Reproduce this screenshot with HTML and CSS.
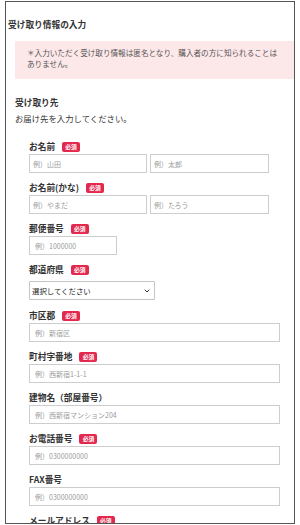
FILE: index.html
```html
<!DOCTYPE html>
<html lang="ja">
<head>
<meta charset="utf-8">
<title>受け取り情報の入力</title>
<link rel="stylesheet" href="styles.css">
</head>
<body>
<div class="frame">
  <h1 class="title">受け取り情報の入力</h1>
  <div class="notice">＊入力いただく受け取り情報は匿名となり、購入者の方に知られることはありません。</div>
  <h2 class="section-title">受け取り先</h2>
  <p class="section-desc">お届け先を入力してください。</p>
  <div class="form">
    <div class="field">
      <div class="label">お名前<span class="badge">必須</span></div>
      <div class="row">
        <input class="input half" placeholder="例）山田">
        <input class="input half" placeholder="例）太郎">
      </div>
    </div>
    <div class="field">
      <div class="label">お名前(かな)<span class="badge">必須</span></div>
      <div class="row">
        <input class="input half" placeholder="例）やまだ">
        <input class="input half" placeholder="例）たろう">
      </div>
    </div>
    <div class="field">
      <div class="label">郵便番号<span class="badge">必須</span></div>
      <input class="input zip" placeholder="例）1000000">
    </div>
    <div class="field field-select">
      <div class="label">都道府県<span class="badge">必須</span></div>
      <div class="select-wrap">
        <select class="select"><option>選択してください</option></select>
        <svg class="chevron" width="6" height="4" viewBox="0 0 6 4"><path d="M0.7 0.7 L3 3 L5.3 0.7" fill="none" stroke="#333" stroke-width="1"/></svg>
      </div>
    </div>
    <div class="field">
      <div class="label">市区郡<span class="badge">必須</span></div>
      <input class="input full" placeholder="例）新宿区">
    </div>
    <div class="field">
      <div class="label">町村字番地<span class="badge">必須</span></div>
      <input class="input full" placeholder="例）西新宿1-1-1">
    </div>
    <div class="field">
      <div class="label">建物名（部屋番号）</div>
      <input class="input full" placeholder="例）西新宿マンション204">
    </div>
    <div class="field">
      <div class="label">お電話番号<span class="badge">必須</span></div>
      <input class="input full" placeholder="例）0300000000">
    </div>
    <div class="field">
      <div class="label">FAX番号</div>
      <input class="input full" placeholder="例）0300000000">
    </div>
    <div class="field">
      <div class="label">メールアドレス<span class="badge">必須</span></div>
      <input class="input full" placeholder="例）info@example.com">
    </div>
  </div>
</div>
</body>
</html>
```

FILE: styles.css
```css
* { box-sizing: border-box; }
html, body { margin: 0; padding: 0; background: #fff; }
body {
  font-family: "Noto Sans CJK JP", "Noto Sans", sans-serif;
  color: #333;
}
.frame {
  width: 290px;
  height: 523px;
  margin: 1px 0 0 5px;
  border: 1px solid #555;
  overflow: hidden;
  padding-top: 16px;
}
.title {
  margin: 0 0 0 2px;
  font-size: 8.7px;
  line-height: 14px;
  font-weight: bold;
}
.notice {
  margin: 9px 0 0 9px;
  background: #fde8e9;
  padding: 7px 12px 10px 12px;
  font-size: 7.6px;
  line-height: 10.5px;
  color: #555;
}
.section-title {
  margin: 17px 0 0 9px;
  font-size: 8.7px;
  line-height: 14px;
  font-weight: bold;
}
.section-desc {
  margin: 1px 0 0 9px;
  font-size: 8.4px;
  line-height: 14px;
}
.form {
  margin-top: 15px;
  padding-left: 23px;
  display: flex;
  flex-direction: column;
  gap: 8px;
}
.field { display: flex; flex-direction: column; }
.label {
  display: flex;
  align-items: center;
  font-size: 8.7px;
  line-height: 14px;
  font-weight: bold;
  height: 14px;
}
.badge {
  display: inline-flex;
  align-items: center;
  justify-content: center;
  margin-left: 7px;
  width: 18px;
  height: 10px;
  border-radius: 2px;
  background: #e3284d;
  color: #fff;
  font-size: 5.8px;
  font-weight: bold;
  line-height: 10px;
}
.row { display: flex; gap: 3px; }
.input {
  display: block;
  height: 19px;
  border: 1px solid #cdcdcd;
  border-radius: 0;
  background: #fff;
  font-family: inherit;
  font-size: 7px;
  padding: 0 5px;
  color: #333;
  outline: none;
  margin: 0;
}
.input::placeholder { color: #9a9a9a; }
.half { width: 118px; padding: 0 3px; }
.half + .half { width: 119px; }
.zip { width: 88px; }
.full { width: 251px; }
.field-select .select-wrap { margin-top: 4px; margin-bottom: 1px; }
.select-wrap { position: relative; width: 126px; }
.select {
  -webkit-appearance: none;
  appearance: none;
  display: block;
  width: 126px;
  height: 19px;
  border: 1px solid #c4c4c4;
  border-radius: 1px;
  background: #fff;
  font-family: inherit;
  font-size: 7.4px;
  color: #222;
  padding: 0 2px;
  margin: 0;
}
.chevron {
  position: absolute;
  right: 5px;
  top: 8px;
  pointer-events: none;
}
```
